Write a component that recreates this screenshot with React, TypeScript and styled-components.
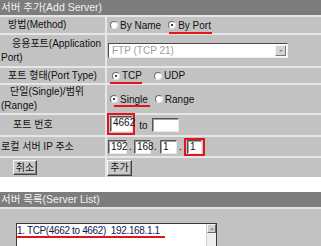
import React from 'react'
import styled, { createGlobalStyle, css } from 'styled-components'

const GlobalStyle = createGlobalStyle`
  html, body {
    margin: 0;
    padding: 0;
    background: #ffffff;
  }
  body {
    font-family: "Liberation Sans", "Noto Sans CJK KR", sans-serif;
    font-size: 10px;
    color: #111;
  }
`

const Page = styled.div`
  width: 321px;
  height: 246px;
  overflow: hidden;
  background: #ffffff;
`

// Dark title bar of each section
const SectionTitle = styled.div`
  grid-column: 1 / -1;
  height: 15px;
  background: #7d7d7d;
  color: #f2f2f2;
  font-size: 10.5px;
  line-height: 15px;
  padding-left: 1px;
  white-space: nowrap;
`

// Form table, the light background shows through the gaps as separators
const FormTable = styled.div`
  display: grid;
  grid-template-columns: 105px 1fr;
  grid-template-rows: 15px 16px 31px 15px 28px 20px 19px 19px;
  gap: 2px;
  background: #e6e6e6;
`

const Label = styled.div<{ $indent?: number }>`
  background: #c2c2c2;
  display: flex;
  align-items: center;
  padding-left: 1px;
  line-height: 14px;
  white-space: nowrap;

  & > span {
    display: block;
    text-indent: ${({ $indent }) => $indent ?? 0}px;
  }
`

const Field = styled.div<{ $pad?: number }>`
  background: #c2c2c2;
  display: flex;
  align-items: center;
  padding-left: ${({ $pad }) => $pad ?? 3}px;
  white-space: nowrap;
`

const RadioOption = styled.label<{ $mark?: [number, number, number] }>`
  display: inline-flex;
  align-items: center;
  gap: 2px;
  margin-right: 7px;
  position: relative;

  ${({ $mark }) =>
    $mark &&
    css`
      &::after {
        content: '';
        position: absolute;
        left: ${$mark[0]}px;
        right: ${$mark[1]}px;
        bottom: ${$mark[2]}px;
        height: 2px;
        background: #e3141b;
      }
    `}
`

const RadioDot = styled.span<{ $checked?: boolean }>`
  position: relative;
  width: 6px;
  height: 6px;
  border-radius: 50%;
  background: #ffffff;
  border: 1px solid;
  border-color: #6a6a6a #e4e4e4 #e4e4e4 #6a6a6a;

  ${({ $checked }) =>
    $checked &&
    css`
      &::after {
        content: '';
        position: absolute;
        left: 2px;
        top: 2px;
        width: 2px;
        height: 2px;
        border-radius: 50%;
        background: #000;
      }
    `}
`

const SelectBox = styled.div`
  width: 180px;
  height: 15px;
  box-sizing: border-box;
  display: flex;
  align-items: stretch;
  background: #ffffff;
  border: 1px solid;
  border-color: #4a4a4a #eeeeee #eeeeee #4a4a4a;
`

const SelectText = styled.div`
  flex: 1;
  color: #9a9a9a;
  padding-left: 3px;
  line-height: 13px;
`

const SelectArrow = styled.div`
  width: 9px;
  margin: 1px;
  background: #d4d4d4;
  border: 1px solid;
  border-color: #f4f4f4 #7a7a7a #7a7a7a #f4f4f4;
  display: flex;
  align-items: center;
  justify-content: center;

  &::before {
    content: '';
    border-left: 2px solid transparent;
    border-right: 2px solid transparent;
    border-top: 2px solid #8a8a8a;
  }
`

const TextBox = styled.div<{ $w: number }>`
  width: ${({ $w }) => $w}px;
  height: 14px;
  box-sizing: border-box;
  background: #ffffff;
  border: 1px solid;
  border-color: #555 #e8e8e8 #e8e8e8 #555;
  box-shadow: inset 1px 1px 0 #a0a0a0;
  padding-left: 2px;
  line-height: 12px;
  font-size: 10px;
  color: #111;
`

const RedFrame = styled.div<{ $pad: string; $shift?: number }>`
  border: 2px solid #e3141b;
  padding: ${({ $pad }) => $pad};
  margin-top: ${({ $shift }) => $shift ?? 0}px;
`

const Sep = styled.span<{ $w: number }>`
  width: ${({ $w }) => $w}px;
  text-align: center;
`

const Button = styled.button`
  width: 24px;
  height: 15px;
  padding: 0;
  font-family: inherit;
  font-size: 10px;
  line-height: 12px;
  color: #111;
  background: #c8c8c8;
  border: 1px solid;
  border-color: #f8f8f8 #404040 #404040 #f8f8f8;
  box-shadow: inset -1px -1px 0 #8a8a8a;
`

const WhiteGap = styled.div`
  height: 15px;
`

const TitleLine = styled.div`
  height: 2px;
  background: #e2e2e2;
`

const ListArea = styled.div`
  background: #c2c2c2;
  height: 40px;
  padding: 14px 0 0 16px;
`

const ListBox = styled.div`
  width: 201px;
  height: 40px;
  box-sizing: border-box;
  display: flex;
  background: #ffffff;
  border: 1px solid #3a3a3a;
`

const ListItems = styled.div`
  flex: 1;
  padding-top: 1px;
`

const ListItem = styled.div`
  position: relative;
  display: inline-block;
  font-size: 10px;
  letter-spacing: -0.35px;
  line-height: 10px;
  color: #151550;
  white-space: pre;

  &::after {
    content: '';
    position: absolute;
    left: 0;
    right: -5px;
    bottom: -2px;
    height: 2px;
    background: #e3141b;
  }
`

const ScrollBar = styled.div`
  width: 9px;
  background: #efefef;
  border-left: 1px solid #cfcfcf;
`

const ScrollButton = styled.div`
  height: 9px;
  background: #d0d0d0;
  border: 1px solid;
  border-color: #f4f4f4 #6a6a6a #6a6a6a #f4f4f4;
  box-sizing: border-box;
  display: flex;
  align-items: center;
  justify-content: center;

  &::before {
    content: '';
    border-left: 2px solid transparent;
    border-right: 2px solid transparent;
    border-bottom: 2px solid #8a8a8a;
  }
`

export default function App() {
  return (
    <Page>
      <GlobalStyle />
      <FormTable>
        <SectionTitle>서버 추가(Add Server)</SectionTitle>

        <Label $indent={7}><span>방법(Method)</span></Label>
        <Field>
          <RadioOption><RadioDot />By Name</RadioOption>
          <RadioOption $mark={[1, -1, -3]}><RadioDot $checked />By Port</RadioOption>
        </Field>

        <Label $indent={11}><span>응용포트(Application<br />Port)</span></Label>
        <Field $pad={1}>
          <SelectBox>
            <SelectText>FTP (TCP 21)</SelectText>
            <SelectArrow />
          </SelectBox>
        </Field>

        <Label $indent={7}><span>포트 형태(Port Type)</span></Label>
        <Field $pad={5}>
          <RadioOption $mark={[-2, 0, -3]}><RadioDot $checked />TCP</RadioOption>
          <RadioOption style={{ marginLeft: 5 }}><RadioDot />UDP</RadioOption>
        </Field>

        <Label $indent={9}><span>단일(Single)/범위<br />(Range)</span></Label>
        <Field>
          <RadioOption $mark={[4, -2, -2]}><RadioDot $checked />Single</RadioOption>
          <RadioOption><RadioDot />Range</RadioOption>
        </Field>

        <Label $indent={12}><span>포트 번호</span></Label>
        <Field $pad={0}>
          <RedFrame $pad="1px 0 1px 1px" $shift={-2}>
            <TextBox $w={23} style={{ height: 16 }}>4662</TextBox>
          </RedFrame>
          <Sep $w={17}>to</Sep>
          <TextBox $w={27}></TextBox>
        </Field>

        <Label><span>로컬 서버 IP 주소</span></Label>
        <Field $pad={1}>
          <TextBox $w={19}>192</TextBox>
          <Sep $w={7}>.</Sep>
          <TextBox $w={17}>168</TextBox>
          <Sep $w={9}>.</Sep>
          <TextBox $w={17}>1</TextBox>
          <Sep $w={7}>.</Sep>
          <RedFrame $pad="0 1px">
            <TextBox $w={15}>1</TextBox>
          </RedFrame>
        </Field>

        <Field $pad={13}>
          <Button>취소</Button>
        </Field>
        <Field $pad={0}>
          <Button style={{ width: 25, height: 16 }}>추가</Button>
        </Field>
      </FormTable>

      <WhiteGap />
      <SectionTitle>서버 목록(Server List)</SectionTitle>
      <TitleLine />
      <ListArea>
        <ListBox>
          <ListItems>
            <ListItem>{'1. TCP(4662 to 4662)  192.168.1.1'}</ListItem>
          </ListItems>
          <ScrollBar>
            <ScrollButton />
          </ScrollBar>
        </ListBox>
      </ListArea>
    </Page>
  )
}
